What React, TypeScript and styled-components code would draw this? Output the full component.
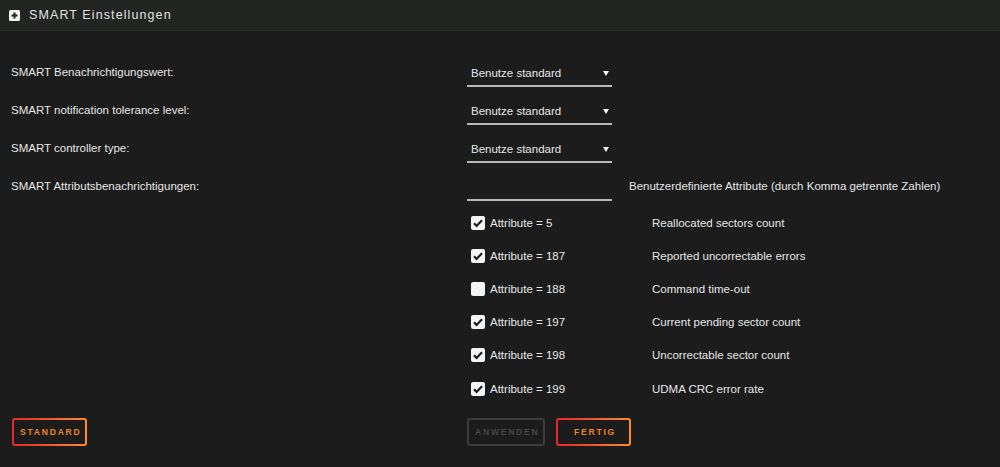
import React from 'react';
import styled, { createGlobalStyle } from 'styled-components';

const GlobalStyle = createGlobalStyle`
  html, body {
    margin: 0;
    padding: 0;
    background: #1c1c1c;
  }
  body {
    font-family: 'Liberation Sans', Arial, sans-serif;
    font-size: 11.5px;
    color: #e6e6e6;
  }
`;

const attributes = [
  { id: 5, checked: true, text: 'Reallocated sectors count' },
  { id: 187, checked: true, text: 'Reported uncorrectable errors' },
  { id: 188, checked: false, text: 'Command time-out' },
  { id: 197, checked: true, text: 'Current pending sector count' },
  { id: 198, checked: true, text: 'Uncorrectable sector count' },
  { id: 199, checked: true, text: 'UDMA CRC error rate' },
];

const selects = [
  'SMART Benachrichtigungswert:',
  'SMART notification tolerance level:',
  'SMART controller type:',
];

function PlusIcon() {
  return (
    <svg width="11" height="11" viewBox="0 0 11 11">
      <rect x="0" y="0" width="11" height="11" rx="1.5" fill="#f2f2f2" />
      <path d="M5.5 2.5v6M2.5 5.5h6" stroke="#222" strokeWidth="2" />
    </svg>
  );
}

function CheckBox({ checked }: { checked: boolean }) {
  return (
    <Box>
      {checked && (
        <svg width="14" height="14" viewBox="0 0 14 14">
          <path d="M3 7.2l2.6 2.7L11 4.2" fill="none" stroke="#1c1c1c" strokeWidth="2.2" />
        </svg>
      )}
    </Box>
  );
}

export default function App() {
  return (
    <Page>
      <GlobalStyle />
      <Header>
        <PlusIcon />
        <Title>SMART Einstellungen</Title>
      </Header>
      <Form>
        {selects.map((label) => (
          <Row key={label}>
            <Label>{label}</Label>
            <Select>
              <span>Benutze standard</span>
              <Arrow />
            </Select>
          </Row>
        ))}
        <Row>
          <Label>SMART Attributsbenachrichtigungen:</Label>
          <InputLine>
            <TextInput />
            <Hint>Benutzerdefinierte Attribute (durch Komma getrennte Zahlen)</Hint>
          </InputLine>
        </Row>
        <AttrList>
          {attributes.map((a) => (
            <AttrRow key={a.id}>
              <span />
              <AttrLine>
                <CheckLabel>
                  <CheckBox checked={a.checked} />
                  Attribute = {a.id}
                </CheckLabel>
                <span>{a.text}</span>
              </AttrLine>
            </AttrRow>
          ))}
        </AttrList>
        <ButtonRow>
          <div>
            <Button>STANDARD</Button>
          </div>
          <Buttons>
            <Button disabled>ANWENDEN</Button>
            <Button>FERTIG</Button>
          </Buttons>
        </ButtonRow>
      </Form>
    </Page>
  );
}

const Page = styled.div`
  width: 1000px;
  height: 467px;
  overflow: hidden;
`;

const Header = styled.div`
  height: 30px;
  display: flex;
  align-items: center;
  gap: 9px;
  padding-left: 9px;
  background: #232523;
  border-bottom: 1px solid #2c2e2c;
`;

const Title = styled.span`
  font-size: 12.5px;
  letter-spacing: 1.1px;
  color: #e2e2e2;
`;

const Form = styled.div`
  padding: 22px 0 0 11px;
`;

const Row = styled.div`
  display: grid;
  grid-template-columns: 456px 1fr;
  height: 38px;
  align-items: center;
`;

const Label = styled.span`
  color: #e6e6e6;
`;

const Select = styled.div`
  width: 145px;
  height: 30px;
  box-sizing: border-box;
  padding: 4px 3px 0 4px;
  display: flex;
  align-items: center;
  justify-content: space-between;
  border-bottom: 2px solid #b8b8b8;
  color: #e6e6e6;
`;

const Arrow = styled.span`
  width: 0;
  height: 0;
  border-left: 3px solid transparent;
  border-right: 3px solid transparent;
  border-top: 5px solid #f2f2f2;
`;

const InputLine = styled.div`
  display: flex;
  align-items: center;
  gap: 17px;
`;

const TextInput = styled.div`
  width: 145px;
  height: 30px;
  box-sizing: border-box;
  border-bottom: 2px solid #b8b8b8;
`;

const Hint = styled.span``;

const AttrList = styled.div`
  padding-top: 1px;
`;

const AttrRow = styled.div`
  display: grid;
  grid-template-columns: 456px 1fr;
  height: 33.2px;
  align-items: center;
`;

const AttrLine = styled.div`
  display: grid;
  grid-template-columns: 181px 1fr;
  padding-left: 4px;
  align-items: center;
`;

const CheckLabel = styled.label`
  display: flex;
  align-items: center;
  gap: 5px;
`;

const Box = styled.span`
  width: 14px;
  height: 14px;
  border-radius: 2px;
  background: #f4f4f4;
  display: inline-flex;
`;

const ButtonRow = styled.div`
  display: grid;
  grid-template-columns: 456px 1fr;
  margin-top: 13px;
  padding-left: 1px;
`;

const Buttons = styled.div`
  display: flex;
  gap: 11px;
  margin-left: -1px;
`;

const Button = styled.button`
  height: 28px;
  padding: 0 4px 0 6px;
  min-width: 75px;
  font-family: 'Liberation Sans', Arial, sans-serif;
  font-size: 8.5px;
  font-weight: bold;
  letter-spacing: 1.8px;
  border: 2px solid transparent;
  border-radius: 3px;
  background:
    linear-gradient(#1c1c1c, #1c1c1c) padding-box,
    linear-gradient(90deg, #e22828, #ff8c2f) border-box;
  color: #f08424;

  &:disabled {
    background: #1c1c1c;
    border-color: #3c3c3c;
    color: #474747;
  }
`;
